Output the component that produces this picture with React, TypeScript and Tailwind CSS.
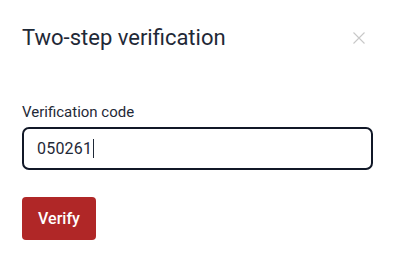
import React from "react";

export default function App() {
  return (
    <div className="w-[396px] h-[263px] bg-white overflow-hidden" style={{ fontFamily: "Roboto, 'Liberation Sans', sans-serif" }}>
      <div className="pl-[22px] pr-[23px] pt-[24px]">
        <div className="flex items-start justify-between">
          <h1 className="text-[22px] leading-[28px] text-[#1f2937] font-normal">Two-step verification</h1>
          <button className="mt-[8px] mr-[8px] text-[#c8c8c8]" aria-label="Close">
            <svg width="12" height="12" viewBox="0 0 12 12" fill="none" stroke="currentColor" strokeWidth="1.1">
              <path d="M0.5 0.5 L11.5 11.5 M11.5 0.5 L0.5 11.5" />
            </svg>
          </button>
        </div>
        <label className="block mt-[50px] text-[15px] leading-[20px] text-[#1f2937]">Verification code</label>
        <div className="mt-[5px] h-[43px] w-full border-2 border-[#111827] rounded-[7px] flex items-center pl-[13px]">
          <span className="text-[16px] text-[#1f2937] tracking-[0.2px]">050261</span>
          <span className="w-[1px] h-[19px] bg-[#1f2937] ml-[1px]"></span>
        </div>
        <button className="mt-[27px] w-[74px] h-[43px] rounded-[4px] bg-[#b02727] text-white text-[16px] font-medium">Verify</button>
      </div>
    </div>
  );
}
